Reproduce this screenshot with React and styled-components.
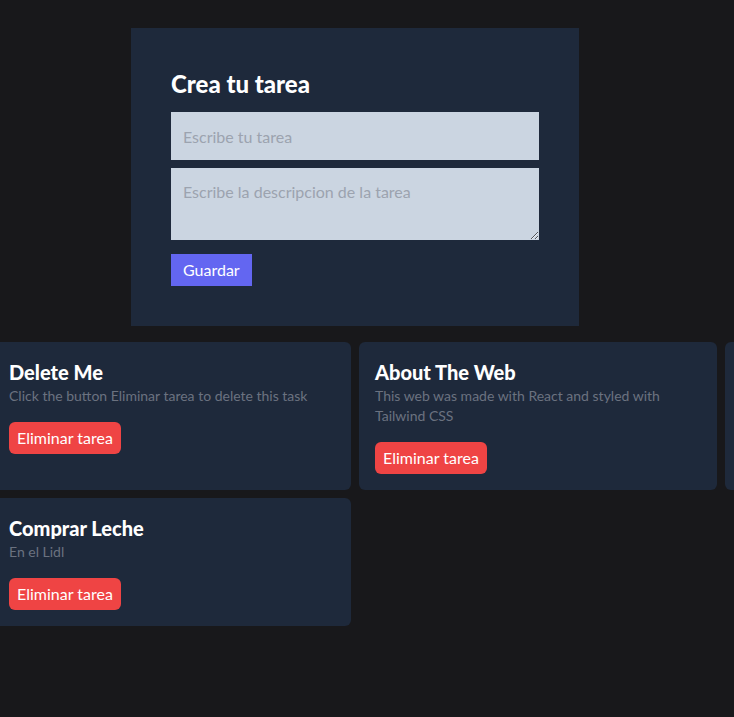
import styled, { createGlobalStyle } from "styled-components";

const GlobalStyle = createGlobalStyle`
  html, body {
    margin: 0;
    padding: 0;
    background-color: #18181b;
    overflow: hidden;
  }
  body {
    font-family: Lato, "Open Sans", sans-serif;
  }
  * {
    box-sizing: border-box;
  }
`;

const Page = styled.main`
  padding-top: 28px;
  min-height: 717px;
`;

const Form = styled.form`
  width: 448px;
  margin-left: 131px;
  padding: 40px;
  background-color: #1e293b;
`;

const FormTitle = styled.h1`
  margin: 0 0 12px;
  font-size: 24px;
  line-height: 32px;
  font-weight: 900;
  color: #ffffff;
`;

const Field = styled.input`
  display: block;
  width: 100%;
  height: 48px;
  margin: 0 0 8px;
  padding: 12px;
  border: none;
  outline: none;
  background-color: #cbd5e1;
  font-family: inherit;
  font-size: 16px;
  line-height: 24px;
  color: #111827;
  &::placeholder {
    color: #9ca3af;
  }
`;

const Area = styled.textarea`
  display: block;
  width: 100%;
  height: 72px;
  margin: 0 0 14px;
  padding: 12px;
  border: none;
  outline: none;
  background-color: #cbd5e1;
  font-family: inherit;
  font-size: 16px;
  line-height: 24px;
  color: #111827;
  &::placeholder {
    color: #9ca3af;
  }
`;

const SaveButton = styled.button`
  padding: 4px 12px;
  border: none;
  background-color: #6366f1;
  color: #ffffff;
  font-family: inherit;
  font-size: 16px;
  line-height: 24px;
  cursor: pointer;
`;

const Grid = styled.section`
  display: grid;
  grid-template-columns: repeat(3, 358px);
  gap: 8px;
  margin: 16px 0 0 -7px;
`;

const Card = styled.article`
  padding: 16px;
  border-radius: 6px;
  background-color: #1e293b;
`;

const CardTitle = styled.h2`
  margin: 0;
  font-size: 20px;
  line-height: 28px;
  font-weight: 900;
  color: #ffffff;
`;

const CardDesc = styled.p`
  margin: 0;
  font-size: 14px;
  line-height: 20px;
  color: #6b7280;
`;

const DeleteButton = styled.button`
  margin-top: 16px;
  padding: 4px 8px;
  border: none;
  border-radius: 6px;
  background-color: #ef4444;
  color: #ffffff;
  font-family: inherit;
  font-size: 16px;
  line-height: 24px;
  cursor: pointer;
`;

const tasks = [
  {
    id: 1,
    title: "Delete Me",
    description: "Click the button Eliminar tarea to delete this task",
  },
  {
    id: 2,
    title: "About The Web",
    description: "This web was made with React and styled with Tailwind CSS",
  },
  { id: 3 },
  { id: 4, title: "Comprar Leche", description: "En el Lidl" },
];

export default function App() {
  return (
    <>
      <GlobalStyle />
      <Page>
        <Form onSubmit={(e) => e.preventDefault()}>
          <FormTitle>Crea tu tarea</FormTitle>
          <Field placeholder="Escribe tu tarea" />
          <Area placeholder="Escribe la descripcion de la tarea" />
          <SaveButton>Guardar</SaveButton>
        </Form>
        <Grid>
          {tasks.map((task) => (
            <Card key={task.id}>
              {task.title && (
                <>
                  <CardTitle>{task.title}</CardTitle>
                  <CardDesc>{task.description}</CardDesc>
                  <DeleteButton>Eliminar tarea</DeleteButton>
                </>
              )}
            </Card>
          ))}
        </Grid>
      </Page>
    </>
  );
}
